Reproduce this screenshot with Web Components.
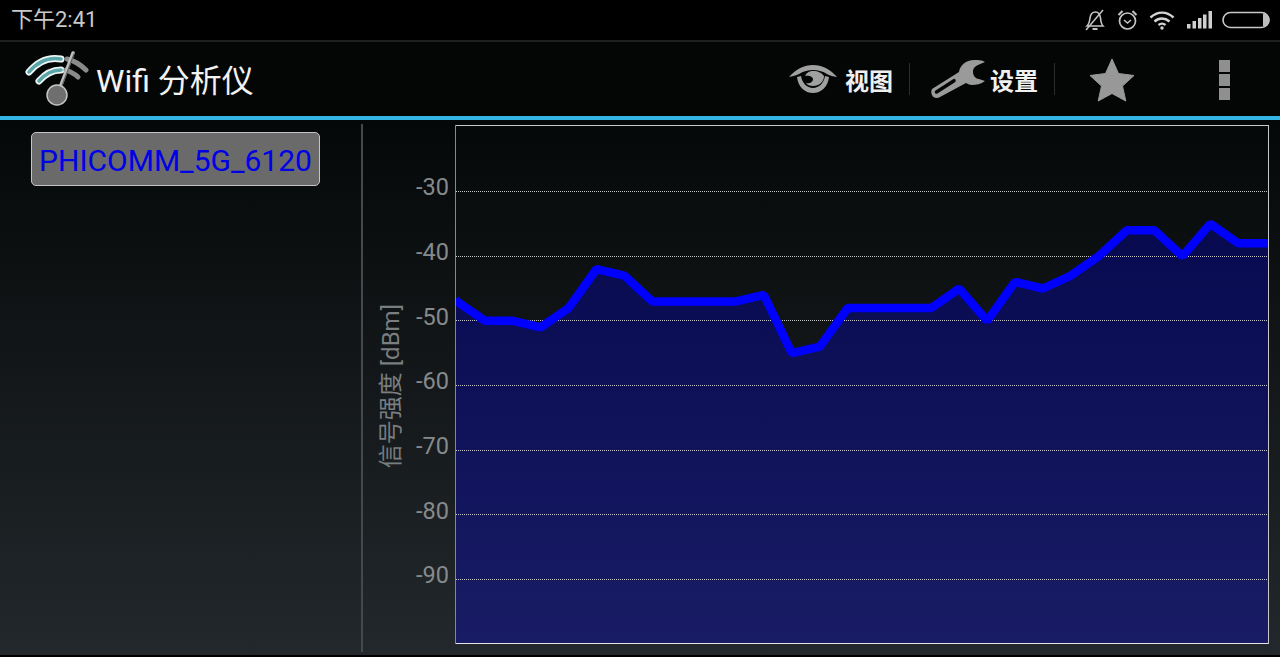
<!DOCTYPE html>
<html lang="zh">
<head>
<meta charset="utf-8">
<title>Wifi 分析仪</title>
<style>
  html, body { margin: 0; padding: 0; background: #000; }
  body { width: 1280px; height: 657px; overflow: hidden; font-family: Roboto, "Noto Sans CJK SC", sans-serif; }
</style>
</head>
<body>
<app-shell>
  <status-bar slot="status" time="下午2:41"></status-bar>
  <action-bar slot="actions" title="Wifi 分析仪">
    <action-item label="视图" icon="eye"></action-item>
    <action-item label="设置" icon="wrench"></action-item>
  </action-bar>
  <network-list slot="side">
    <network-chip>PHICOMM_5G_6120</network-chip>
  </network-list>
  <signal-chart slot="main" axis="信号强度 [dBm]"></signal-chart>
</app-shell>

<script>
class AppShell extends HTMLElement {
  constructor () {
    super()
    this.attachShadow({ mode: 'open' }).innerHTML = /* html */`
      <style>
        :host { display: flex; flex-direction: column; width: 1280px; height: 657px; background: #000; }
        .content {
          flex: 1;
          display: flex;
          min-height: 0;
          margin-bottom: 2px;
          background: linear-gradient(#050808, #23282c);
        }
      </style>
      <slot name="status"></slot>
      <slot name="actions"></slot>
      <div class="content">
        <slot name="side"></slot>
        <slot name="main"></slot>
      </div>
    `
  }
}

class StatusBar extends HTMLElement {
  constructor () {
    super()
    this.attachShadow({ mode: 'open' })
  }

  connectedCallback () {
    this.shadowRoot.innerHTML = /* html */`
      <style>
        :host {
          display: flex;
          align-items: center;
          height: 40px;
          padding: 0 10px 0 11px;
          box-sizing: border-box;
          background: #000;
          color: #c9c9c9;
          font: 22px Roboto, "Noto Sans CJK SC", sans-serif;
        }
        .time { flex: 1; line-height: 40px; }
        svg { display: block; }
      </style>
      <span class="time">${this.getAttribute('time')}</span>
      <svg width="22" height="22" viewBox="0 0 22 22" fill="none" stroke="#c4c4c4" stroke-width="1.6">
        <path d="M3 17c2-2 2.500-4 3-8C6.500 5.500 8.500 3 11.500 3S16 5.500 16.500 9c.4 4 .6 6 2.500 8z"/>
        <path d="M8.500 20h5" stroke-width="2"/>
        <path d="M2 21 19 1" stroke-width="1.500"/>
      </svg>
      <svg width="21" height="22" viewBox="0 0 21 22" fill="none" stroke="#c4c4c4" stroke-width="1.700" style="margin-left:11px">
        <circle cx="10.500" cy="12" r="8"/>
        <path d="M7 11l3.500 3L14 11" stroke-width="1.500"/>
        <path d="M1.500 6 5.500 2M19.500 6l-4-4" stroke-width="2"/>
      </svg>
      <svg width="26" height="20" viewBox="0 0 26 20" fill="none" stroke="#d4d4d4" stroke-width="2.400" style="margin-left:11px">
        <path d="M1.500 7.500c7-6.500 16-6.500 23 0"/>
        <path d="M5.500 11.500c4.500-4 10.500-4 15 0"/>
        <path d="M9.500 15c2.300-1.800 4.700-1.800 7 0"/>
        <circle cx="13" cy="18" r="1.700" fill="#d4d4d4" stroke="none"/>
      </svg>
      <svg width="25" height="18" viewBox="0 0 25 18" fill="#cfcfcf" style="margin-left:12px">
        <rect x="0" y="13" width="3.500" height="4.500"/>
        <rect x="5.500" y="10" width="3.500" height="7.500"/>
        <rect x="11" y="7" width="3.500" height="10.500"/>
        <rect x="16" y="3.500" width="3.500" height="14"/>
        <rect x="21.500" y="0" width="3.500" height="17.500"/>
      </svg>
      <svg width="48" height="18" viewBox="0 0 48 18" style="margin-left:10px">
        <rect x="1" y="1.500" width="46" height="15" rx="7.500" fill="none" stroke="#c8c8c8" stroke-width="1.600"/>
        <path d="M41 2.500a6.500 6.500 0 0 1 0 13z" fill="#bdbdbd"/>
      </svg>
    `
  }
}

class ActionBar extends HTMLElement {
  constructor () {
    super()
    this.attachShadow({ mode: 'open' })
  }

  connectedCallback () {
    this.shadowRoot.innerHTML = /* html */`
      <style>
        :host {
          display: flex;
          align-items: center;
          height: 80px;
          box-sizing: border-box;
          padding: 0 0 0 25px;
          border-top: 2px solid #1f1f1f;
          border-bottom: 4px solid #33b5e5;
          background: #040606;
        }
        .logo { display: block; margin-right: 7px; }
        h1 {
          flex: 1;
          margin: 0 0 2px;
          color: #f2f2f2;
          font: 400 32px Roboto, "Noto Sans CJK SC", sans-serif;
        }
        .star { display: block; margin: 2px 84px 0 13px; }
        .more { display: flex; flex-direction: column; gap: 2px; margin: 2px 50px 0 0; }
        .more i { display: block; width: 11px; height: 12px; background: #8f8f8f; }
      </style>
      <svg class="logo" width="64" height="56" viewBox="0 0 64 56" fill="none" stroke-linecap="round">
        <path d="M4 21C14 9 25 6 36 8" stroke="#eef5f5" stroke-width="7"/>
        <path d="M4 21C14 9 25 6 36 8" stroke="#5aa6a8" stroke-width="3.500"/>
        <path d="M14 30C21 22 28 19 36 19" stroke="#eef5f5" stroke-width="7"/>
        <path d="M14 30C21 22 28 19 36 19" stroke="#5aa6a8" stroke-width="3.500"/>
        <path d="M42 8C50 10 56 14 61 19" stroke="#8a8a8a" stroke-width="5"/>
        <path d="M41 19C46 21 50 23 53 26" stroke="#8a8a8a" stroke-width="5"/>
        <path d="M33 42 48 2" stroke="#bdbdbd" stroke-width="3.500"/>
        <path d="M35 40 49 3" stroke="#5d5d5d" stroke-width="1.200"/>
        <circle cx="32" cy="44" r="10" fill="#6f6f6f" stroke="#c4c4c4" stroke-width="1.500"/>
      </svg>
      <h1>${this.getAttribute('title')}</h1>
      <slot></slot>
      <svg class="star" width="46" height="44" viewBox="0 0 46 44">
        <path d="M23 1 29.500 15.500 45 17.500 33.500 28 36.800 43 23 35.500 9.200 43 12.500 28 1 17.500 16.500 15.500z" fill="#989898" stroke="#989898" stroke-linejoin="round"/>
      </svg>
      <div class="more"><i></i><i></i><i></i></div>
    `
  }
}

const ACTION_ICONS = {
  eye: /* html */`
    <svg width="48" height="30" viewBox="0 0 48 30" fill="#a0a0a0" style="margin-right:8px">
      <path d="M0 13C7 5 15 1 24 1s17 4 24 12c-6-1-8-2-10-3-5-3-9-4-14-4s-9 1-14 4c-2 1-5 2-10 3z"/>
      <path d="M8 13c1 10 8 16 16 16s15-6 16-16l-4-1c-1 7-6 12-12 12s-11-5-12-12z"/>
      <path d="M16 12c2-4 5-5 8-5 5 0 9 2 11 5 0 6-5 10-11 10-3 0-6-1-7-3 4 1 7-1 7-4 0-2-4-4-8-3z"/>
    </svg>`,
  wrench: /* html */`
    <svg width="55" height="40" viewBox="0 0 55 40" style="margin-right:4px">
      <path d="M1 30 28 13C29 6 35 1 43 1c4 0 8 0 11 2l-7 3c-4 2-5 4-5 7 0 4 3 7 6 7l6 2c-4 3-9 4-13 4-2 0-4-1-6-2L9 38c-3 2-7 1-8-2-1-2-1-4 0-6z" fill="#9a9a9a"/>
      <path d="M5.500 33 23 21.700" stroke="#040606" stroke-width="3.500" stroke-linecap="round"/>
    </svg>`
}

class ActionItem extends HTMLElement {
  constructor () {
    super()
    this.attachShadow({ mode: 'open' })
  }

  connectedCallback () {
    this.shadowRoot.innerHTML = /* html */`
      <style>
        :host {
          display: inline-flex;
          align-items: center;
          height: 32px;
          padding-right: 16px;
          margin-right: 21px;
          border-right: 1px solid #2c2c2c;
          color: #f0f0f0;
          font: 700 24px "Noto Sans CJK SC", sans-serif;
        }
        svg { display: block; }
      </style>
      ${ACTION_ICONS[this.getAttribute('icon')]}
      <span>${this.getAttribute('label')}</span>
    `
  }
}

class NetworkList extends HTMLElement {
  constructor () {
    super()
    this.attachShadow({ mode: 'open' }).innerHTML = /* html */`
      <style>
        :host {
          display: block;
          flex: none;
          width: 363px;
          height: 528px;
          margin-top: 4px;
          box-sizing: border-box;
          padding: 8px 0 0 31px;
          border-right: 2px solid #44494c;
        }
      </style>
      <slot></slot>
    `
  }
}

class NetworkChip extends HTMLElement {
  constructor () {
    super()
    this.attachShadow({ mode: 'open' }).innerHTML = /* html */`
      <style>
        :host {
          display: flex;
          align-items: center;
          justify-content: center;
          width: 289px;
          height: 54px;
          padding-top: 3px;
          box-sizing: border-box;
          border: 1px solid #c4c4c4;
          border-radius: 5px;
          background: #6a6a6a;
          color: #0000e6;
          font: 30px Roboto, sans-serif;
        }
      </style>
      <slot></slot>
    `
  }
}

class SignalChart extends HTMLElement {
  constructor () {
    super()
    this.attachShadow({ mode: 'open' })
    this.data = [-47, -50, -50, -51, -48, -42, -43, -47, -47, -47, -47, -46, -55, -54, -48,
      -48, -48, -48, -45, -50, -44, -45, -43, -40, -36, -36, -40, -35, -38, -38]
    this.ticks = [-30, -40, -50, -60, -70, -80, -90]
  }

  connectedCallback () {
    this.render()
  }

  render () {
    const width = 814
    const height = 519
    const rowHeight = 64.67
    const toY = db => 66.5 + (-30 - db) * rowHeight / 10
    const pts = this.data.map((db, i) => `${(2 + i * 27.9).toFixed(1)},${toY(db).toFixed(1)}`).join(' ')
    const line = `0,${toY(-46.7).toFixed(1)} ${pts} ${width - 1},${toY(-38).toFixed(1)}`
    const grid = this.ticks.map(db => {
      const y = Math.floor(toY(db)) + 0.5
      return `<line x1="1" x2="${width - 1}" y1="${y}" y2="${y}"/>`
    }).join('')

    this.shadowRoot.innerHTML = /* html */`
      <style>
        :host {
          display: flex;
          flex: 1;
          min-width: 0;
          height: 519px;
          margin-top: 5px;
          color: #858a8c;
          font-family: Roboto, "Noto Sans CJK SC", sans-serif;
        }
        .axis {
          flex: none;
          width: 50px;
          padding-top: 4px;
          box-sizing: border-box;
          display: flex;
          align-items: center;
          justify-content: center;
          font-size: 24px;
          color: #797e80;
        }
        .axis span {
          writing-mode: vertical-rl;
          text-orientation: sideways;
          transform: rotate(180deg);
          white-space: nowrap;
        }
        .ticks {
          flex: none;
          width: 36px;
          margin-right: 6px;
          padding-top: 30px;
          display: grid;
          grid-template-rows: repeat(7, ${rowHeight}px);
          align-content: start;
          justify-items: end;
          align-items: center;
          font-size: 23.500px;
        }
        svg { display: block; flex: none; }
      </style>
      <div class="axis"><span>${this.getAttribute('axis')}</span></div>
      <div class="ticks">${this.ticks.map(t => `<span>${t}</span>`).join('')}</div>
      <svg width="${width}" height="${height}" viewBox="0 0 ${width} ${height}">
        <polygon points="0,${height} ${line} ${width - 1},${height}" fill="#0000ff" fill-opacity="0.27"/>
        <g stroke="#c4c4c4" stroke-width="1" stroke-dasharray="1 1" shape-rendering="crispEdges">${grid}</g>
        <polyline points="${line}" fill="none" stroke="#0000ff" stroke-width="8.500" stroke-linejoin="bevel"/>
        <g shape-rendering="crispEdges" stroke-width="1">
          <line x1="0" x2="${width}" y1="0.5" y2="0.5" stroke="#c8c8c8"/>
          <line x1="0" x2="${width}" y1="${height - 0.5}" y2="${height - 0.5}" stroke="#e4e4e4"/>
          <line x1="0.5" x2="0.5" y1="0" y2="${height}" stroke="#858a88"/>
          <line x1="${width - 0.5}" x2="${width - 0.5}" y1="0" y2="${height}" stroke="#c8c8c8"/>
        </g>
      </svg>
    `
  }
}

customElements.define('app-shell', AppShell)
customElements.define('status-bar', StatusBar)
customElements.define('action-bar', ActionBar)
customElements.define('action-item', ActionItem)
customElements.define('network-list', NetworkList)
customElements.define('network-chip', NetworkChip)
customElements.define('signal-chart', SignalChart)
</script>
</body>
</html>
